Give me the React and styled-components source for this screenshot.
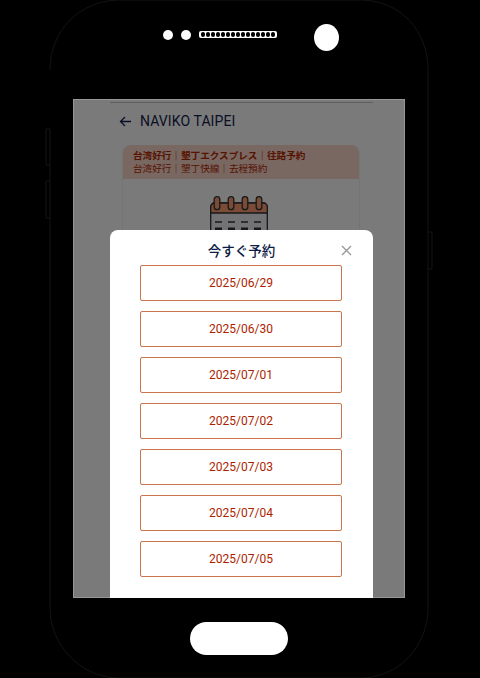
import React from 'react'
import styled, { createGlobalStyle } from 'styled-components'

const GlobalStyle = createGlobalStyle`
  html, body {
    margin: 0;
    padding: 0;
    background: #000;
  }
  body {
    font-family: Roboto, "Noto Sans CJK JP", sans-serif;
  }
`

const dates = [
  '2025/06/29',
  '2025/06/30',
  '2025/07/01',
  '2025/07/02',
  '2025/07/03',
  '2025/07/04',
  '2025/07/05'
]

const Phone = styled.div`
  position: relative;
  width: 480px;
  height: 678px;
  overflow: hidden;
  background: #000;
  display: flex;
  flex-direction: column;
  align-items: center;
`

const Outline = styled.svg`
  position: absolute;
  left: 0;
  top: 0;
`

const TopBezel = styled.div`
  height: 99px;
  width: 100%;
  flex: none;
  display: flex;
  align-items: flex-start;
  padding: 24px 0 0 163px;
  box-sizing: border-box;
`

const Dot = styled.div`
  width: 10px;
  height: 10px;
  margin: 6px 8px 0 0;
  border-radius: 50%;
  background: #fff;
`

const Speaker = styled.div`
  width: 78px;
  height: 7px;
  margin: 7px 37px 0 0;
  box-sizing: border-box;
  border-radius: 2px;
  background: #fff;
  display: flex;
  align-items: center;
  justify-content: space-between;
  padding: 0 1.5px;
`

const SpeakerHole = styled.span`
  width: 4.5px;
  height: 4.5px;
  border-radius: 50%;
  background: #000;
`

const Camera = styled.div`
  width: 25px;
  height: 27px;
  border-radius: 50%;
  background: #fff;
`

const Screen = styled.div`
  position: relative;
  width: 332px;
  height: 499px;
  flex: none;
  margin-right: 2px;
  overflow: hidden;
  background: #fff;
`

const Page = styled.div`
  width: 263px;
  margin: 3px 0 0 37px;
  border-top: 1px solid #c4c4c4;
  display: flex;
  flex-direction: column;
`

const Header = styled.div`
  display: flex;
  align-items: center;
  gap: 8px;
  height: 36px;
  padding-left: 9px;
  color: #14234f;
  font-size: 14px;
  letter-spacing: 0.1px;
`

const Card = styled.div`
  margin: 6px 13px 0 12px;
  height: 300px;
  border-radius: 8px 8px 0 0;
  border: 1px solid #f2f2f2;
  border-top: none;
`

const CardHead = styled.div`
  height: 34px;
  box-sizing: border-box;
  padding: 4px 10px 0;
  border-radius: 8px 8px 0 0;
  background: #fcd7cb;
  color: #b42a00;
  font-family: "Noto Sans CJK JP", sans-serif;
  font-size: 9.6px;
  line-height: 13px;
  white-space: nowrap;
`

const CardTitle = styled.div`
  font-weight: 700;
`

const CalendarArt = styled.svg`
  display: block;
  margin: 17px 0 0 87px;
`

const Overlay = styled.div`
  position: absolute;
  inset: 0;
  background: rgba(0, 0, 0, 0.52);
  box-shadow: inset 0 0 0 1px rgba(255, 255, 255, 0.22);
`

const Modal = styled.div`
  position: absolute;
  left: 37px;
  bottom: 0;
  width: 263px;
  height: 368px;
  box-sizing: border-box;
  border-radius: 8px 8px 0 0;
  background: #fff;
  padding-top: 10px;
  display: flex;
  flex-direction: column;
  align-items: center;
`

const ModalTitle = styled.div`
  height: 25px;
  color: #0d1b45;
  font-family: "Noto Sans CJK JP", sans-serif;
  font-size: 13.5px;
  font-weight: 500;
  line-height: 20px;
`

const CloseButton = styled.button`
  position: absolute;
  right: 20px;
  top: 14px;
  width: 13px;
  height: 13px;
  padding: 0;
  border: none;
  background: none;
  color: #999;
  display: flex;
`

const DateList = styled.div`
  display: flex;
  flex-direction: column;
  gap: 10px;
  margin-right: 2px;
`

const DateButton = styled.button`
  width: 202px;
  height: 36px;
  padding: 0 0 0 1px;
  border: 1px solid #c8744c;
  border-radius: 2px;
  background: #fff;
  color: #ac1e00;
  font-family: Roboto, sans-serif;
  font-size: 12px;
`

const HomeButton = styled.div`
  width: 98px;
  height: 33px;
  margin: 24px 0 0 -3px;
  flex: none;
  border-radius: 17px;
  background: #fff;
`

const Calendar = () => (
  <CalendarArt width="58" height="50" viewBox="0 0 58 50">
    <rect x="0.7" y="7" width="56.6" height="42" rx="4" fill="#f0f1f6" stroke="#333" strokeWidth="1.3" />
    <path d="M0.7 17V11a4 4 0 0 1 4-4h48.6a4 4 0 0 1 4 4v6z" fill="#ff9f75" stroke="#333" strokeWidth="1.3" />
    {[7, 21, 35, 49].map(x => (
      <rect key={x} x={x - 2.8} y="0.7" width="5.6" height="13" rx="2.8" fill="#ff9f75" stroke="#333" strokeWidth="1.3" />
    ))}
    {[26, 33].map((y, i) => (
      <path key={y} d={`M5 ${y}h7M18 ${y}h7M31 ${y}h7M44 ${y}h7`} stroke="#333" strokeWidth={i ? 3 : 1.3} />
    ))}
  </CalendarArt>
)

export default function App() {
  return (
    <>
      <GlobalStyle />
      <Phone>
        <Outline width="480" height="678" viewBox="0 0 480 678" fill="none" stroke="#141414" strokeWidth="1">
          <path d="M50 70C50 30 80 1 118 0H362C400 1 428 30 428 70V608C428 645 400 677 362 678H118C80 677 50 645 50 608V129" />
          <path d="M50 129H46V165H50M50 181H46V218H50" />
          <path d="M428 232H432V269H428" />
        </Outline>
        <TopBezel>
          <Dot />
          <Dot />
          <Speaker>
            {Array.from({ length: 15 }, (_, i) => (
              <SpeakerHole key={i} />
            ))}
          </Speaker>
          <Camera />
        </TopBezel>
        <Screen>
          <Page>
            <Header>
              <svg width="13" height="13" viewBox="0 0 13 13" fill="none" stroke="currentColor" strokeWidth="1.3">
                <path d="M12 6.5H1.5M6 2L1.5 6.5 6 11" />
              </svg>
              NAVIKO TAIPEI
            </Header>
            <Card>
              <CardHead>
                <CardTitle>台湾好行｜墾丁エクスプレス｜往路予約</CardTitle>
                <div>台湾好行｜墾丁快線｜去程預約</div>
              </CardHead>
              <Calendar />
            </Card>
          </Page>
          <Overlay />
          <Modal>
            <ModalTitle>今すぐ予約</ModalTitle>
            <CloseButton aria-label="close">
              <svg width="13" height="13" viewBox="0 0 13 13" fill="none" stroke="currentColor" strokeWidth="1.4">
                <path d="M2 2l9 9M11 2l-9 9" />
              </svg>
            </CloseButton>
            <DateList>
              {dates.map(d => (
                <DateButton key={d}>{d}</DateButton>
              ))}
            </DateList>
          </Modal>
        </Screen>
        <HomeButton />
      </Phone>
    </>
  )
}
